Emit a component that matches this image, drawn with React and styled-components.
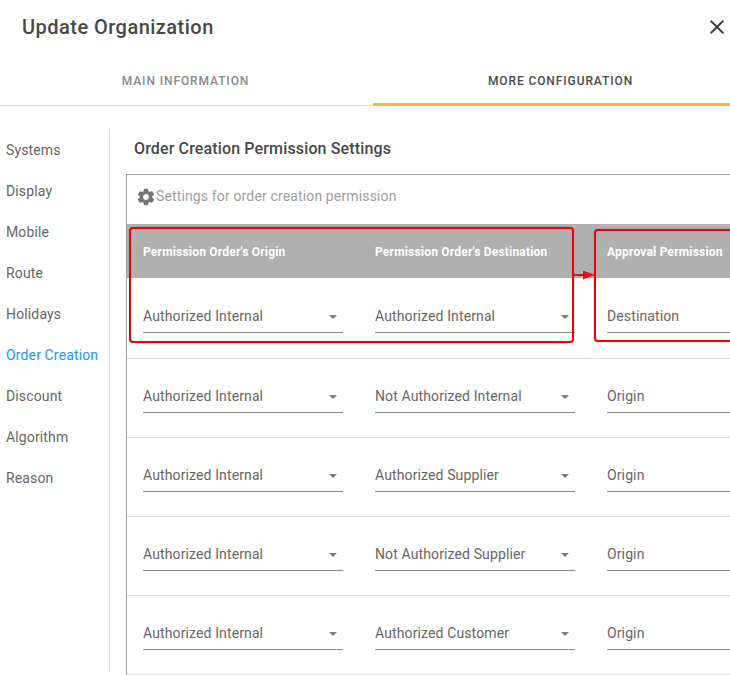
import React from "react";
import styled, { createGlobalStyle } from "styled-components";

const GlobalStyle = createGlobalStyle`
  html, body {
    margin: 0;
    padding: 0;
    background: #fff;
    font-family: Roboto, "Liberation Sans", sans-serif;
  }
`;

const sections = ["Systems", "Display", "Mobile", "Route", "Holidays", "Order Creation", "Discount", "Algorithm", "Reason"];

const rows = [
  { origin: "Authorized Internal", destination: "Authorized Internal", approval: "Destination" },
  { origin: "Authorized Internal", destination: "Not Authorized Internal", approval: "Origin" },
  { origin: "Authorized Internal", destination: "Authorized Supplier", approval: "Origin" },
  { origin: "Authorized Internal", destination: "Not Authorized Supplier", approval: "Origin" },
  { origin: "Authorized Internal", destination: "Authorized Customer", approval: "Origin" },
];

const App = () => {
  return (
    <Page>
      <GlobalStyle />
      <Header>
        <Title>Update Organization</Title>
        <CloseButton aria-label="Close">
          <svg width="24" height="24" viewBox="0 0 24 24" fill="#424242">
            <path d="M19 6.41 17.59 5 12 10.59 6.41 5 5 6.41 10.59 12 5 17.59 6.41 19 12 13.41 17.59 19 19 17.59 13.41 12z" />
          </svg>
        </CloseButton>
      </Header>
      <Tabs>
        <Tab>MAIN INFORMATION</Tab>
        <Tab $active>MORE CONFIGURATION</Tab>
      </Tabs>
      <Body>
        <Sidebar>
          {sections.map((name) => (
            <SideItem key={name} $active={name === "Order Creation"}>
              {name}
            </SideItem>
          ))}
        </Sidebar>
        <Content>
          <Heading>Order Creation Permission Settings</Heading>
          <Card>
            <CardTitle>
              <svg width="20" height="20" viewBox="0 0 24 24" fill="#757575">
                <path d="M19.43 12.98c.04-.32.07-.64.07-.98s-.03-.66-.07-.98l2.11-1.65c.19-.15.24-.42.12-.64l-2-3.46c-.12-.22-.39-.3-.61-.22l-2.49 1c-.52-.4-1.08-.73-1.69-.98l-.38-2.65C14.46 2.18 14.25 2 14 2h-4c-.25 0-.46.18-.49.42l-.38 2.65c-.61.25-1.17.59-1.69.98l-2.49-1c-.23-.09-.49 0-.61.22l-2 3.46c-.13.22-.07.49.12.64l2.11 1.65c-.04.32-.07.65-.07.98s.03.66.07.98l-2.11 1.65c-.19.15-.24.42-.12.64l2 3.46c.12.22.39.3.61.22l2.49-1c.52.4 1.08.73 1.69.98l.38 2.65c.03.24.24.42.49.42h4c.25 0 .46-.18.49-.42l.38-2.65c.61-.25 1.17-.59 1.69-.98l2.49 1c.23.09.49 0 .61-.22l2-3.46c.12-.22.07-.49-.12-.64l-2.11-1.65zM12 15.5c-1.93 0-3.5-1.57-3.5-3.5s1.57-3.5 3.5-3.5 3.5 1.57 3.5 3.5-1.57 3.5-3.5 3.5z" />
              </svg>
              Settings for order creation permission
            </CardTitle>
            <Table>
              <HeadRow>
                <HeadCell>Permission Order's Origin</HeadCell>
                <HeadCell>Permission Order's Destination</HeadCell>
                <HeadCell>Approval Permission</HeadCell>
              </HeadRow>
              {rows.map((row, i) => (
                <Row key={i} $first={i === 0}>
                  <Select>
                    {row.origin}
                    <Caret />
                  </Select>
                  <Select>
                    {row.destination}
                    <Caret />
                  </Select>
                  <Select>{row.approval}</Select>
                </Row>
              ))}
              <ConditionBox />
              <Arrow>
                <svg width="22" height="10" viewBox="0 0 22 10">
                  <path d="M0 5h12" stroke="#c8141c" strokeWidth="2" />
                  <path d="M9 .5 21 5 9 9.500z" fill="#ee0a12" />
                </svg>
              </Arrow>
              <ApprovalBox />
            </Table>
          </Card>
        </Content>
      </Body>
    </Page>
  );
};

const Page = styled.div`
  width: 730px;
  height: 675px;
  overflow: hidden;
  color: #424242;
`;

const Header = styled.div`
  height: 55px;
  padding: 0 1px 2px 22px;
  box-sizing: border-box;
  display: flex;
  align-items: center;
  justify-content: space-between;
`;

const Title = styled.h1`
  margin: 0;
  font-size: 20px;
  font-weight: 500;
  letter-spacing: 0.47px;
  color: #484848;
`;

const CloseButton = styled.button`
  display: flex;
  width: 24px;
  height: 24px;
  padding: 0;
  border: 0;
  background: none;
`;

const Tabs = styled.div`
  display: flex;
  width: 746px;
  height: 51px;
  box-sizing: border-box;
  border-bottom: 1px solid #e0e0e0;
`;

const Tab = styled.div`
  flex: 0 0 373px;
  height: 51px;
  box-sizing: border-box;
  display: flex;
  align-items: center;
  justify-content: center;
  font-size: 12px;
  font-weight: 500;
  letter-spacing: 0.9px;
  color: ${(p) => (p.$active ? "#4a4a4a" : "#8a8a8a")};
  border-bottom: ${(p) => (p.$active ? "3px solid #ffb13b" : "0")};
  padding: ${(p) => (p.$active ? "3px 0 0 2px" : "0 2px 0 0")};
`;

const Body = styled.div`
  display: flex;
  padding-top: 24px;
`;

const Sidebar = styled.nav`
  width: 109px;
  height: 542px;
  flex: none;
  border-right: 1px solid #e0e0e0;
`;

const SideItem = styled.div`
  height: 41px;
  padding: 10px 0 0 6px;
  box-sizing: border-box;
  font-size: 14px;
  line-height: 20px;
  letter-spacing: 0.14px;
  color: ${(p) => (p.$active ? "#2196f3" : "#666")};
`;

const Content = styled.div`
  flex: none;
  width: 620px;
  padding-left: 16px;
  box-sizing: border-box;
`;

const Heading = styled.h2`
  margin: 4px 0 11px 8px;
  height: 29px;
  font-size: 16px;
  font-weight: 500;
  line-height: 29px;
  letter-spacing: 0.14px;
  color: #484848;
`;

const Card = styled.div`
  border: 1px solid #9e9e9e;
  border-right: 0;
  width: 700px;
`;

const CardTitle = styled.div`
  height: 49px;
  box-sizing: border-box;
  padding: 0 0 8px 9px;
  display: flex;
  align-items: center;
  font-size: 14px;
  letter-spacing: 0.14px;
  color: #9e9e9e;
  svg {
    margin-top: 2px;
    flex: none;
  }
`;

const Table = styled.div`
  position: relative;
`;

const HeadRow = styled.div`
  display: grid;
  grid-template-columns: repeat(3, 200px);
  column-gap: 32px;
  height: 54px;
  box-sizing: border-box;
  align-items: center;
  padding: 2px 0 0 16px;
  background: #b0b0b0;
`;

const HeadCell = styled.div`
  font-size: 12px;
  font-weight: 700;
  letter-spacing: 0.2px;
  color: #fff;
  white-space: nowrap;
`;

const Row = styled.div`
  display: grid;
  grid-template-columns: repeat(3, 200px);
  column-gap: 32px;
  height: ${(p) => (p.$first ? "81px" : "79px")};
  box-sizing: border-box;
  align-items: center;
  padding-left: 16px;
  border-bottom: 1px solid #e0e0e0;
`;

const Select = styled.div`
  position: relative;
  height: 28px;
  box-sizing: border-box;
  border-bottom: 1px solid #8a8a8a;
  font-size: 14px;
  line-height: 22px;
  letter-spacing: 0.12px;
  color: #666;
  margin-top: 2px;
  white-space: nowrap;
`;

const Caret = styled.span`
  position: absolute;
  right: 6px;
  top: 10px;
  border-left: 4.5px solid transparent;
  border-right: 4.5px solid transparent;
  border-top: 4.5px solid #7a7a7a;
`;

const ConditionBox = styled.div`
  position: absolute;
  left: 2px;
  top: 3px;
  width: 445px;
  height: 116px;
  box-sizing: border-box;
  border: 2px solid #f00000;
  border-radius: 4px;
  box-shadow: 0 0 1px rgba(0, 0, 0, 0.55);
`;

const ApprovalBox = styled.div`
  position: absolute;
  left: 467px;
  top: 5px;
  width: 180px;
  height: 113px;
  box-sizing: border-box;
  border: 2px solid #f00000;
  border-radius: 4px;
  box-shadow: 0 0 1px rgba(0, 0, 0, 0.55);
`;

const Arrow = styled.div`
  position: absolute;
  left: 447px;
  top: 46px;
  display: flex;
`;

export default App;
